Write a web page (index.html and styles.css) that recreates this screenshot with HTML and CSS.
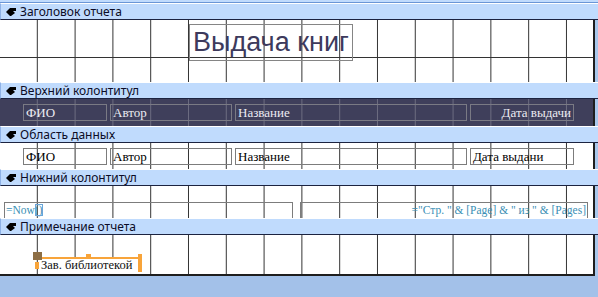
FILE: index.html
```html
<!DOCTYPE html>
<html>
<head>
	<meta charset="UTF-8">
	<title>Выдача книг - конструктор</title>
	<link rel="stylesheet" href="styles.css">
</head>
<body>
	<div class="designer">
		<div class="topstrip"></div>

		<div class="bar"><span class="selector"><svg width="10" height="8" viewBox="0 0 10 8"><path d="M0 4 L4 0 L10 0 L10 3 L7 3 L9 5 L5 8 L4 8 Z"/></svg></span>Заголовок отчета</div>
		<div class="row">
			<div class="area grid-h s-header">
				<div class="ctl title">Выдача книг</div>
			</div>
			<div class="gutter"></div>
		</div>

		<div class="bar"><span class="selector"><svg width="10" height="8" viewBox="0 0 10 8"><path d="M0 4 L4 0 L10 0 L10 3 L7 3 L9 5 L5 8 L4 8 Z"/></svg></span>Верхний колонтитул</div>
		<div class="row">
			<div class="area dark s-page">
				<div class="ctl lbl c-fio">ФИО</div>
				<div class="ctl lbl c-author">Автор</div>
				<div class="ctl lbl c-name">Название</div>
				<div class="ctl lbl c-date right">Дата выдачи</div>
			</div>
			<div class="gutter"></div>
		</div>

		<div class="bar"><span class="selector"><svg width="10" height="8" viewBox="0 0 10 8"><path d="M0 4 L4 0 L10 0 L10 3 L7 3 L9 5 L5 8 L4 8 Z"/></svg></span>Область данных</div>
		<div class="row">
			<div class="area s-data">
				<div class="ctl fld c-fio">ФИО</div>
				<div class="ctl fld c-author">Автор</div>
				<div class="ctl fld c-name">Название</div>
				<div class="ctl fld c-date">Дата выдани</div>
			</div>
			<div class="gutter"></div>
		</div>

		<div class="bar"><span class="selector"><svg width="10" height="8" viewBox="0 0 10 8"><path d="M0 4 L4 0 L10 0 L10 3 L7 3 L9 5 L5 8 L4 8 Z"/></svg></span>Нижний колонтитул</div>
		<div class="row">
			<div class="area s-footer">
				<div class="ctl expr c-now">=Now<span class="paren">()</span></div>
				<div class="ctl expr c-pages right">="Стр. " &amp; [Page] &amp; " из " &amp; [Pages]</div>
			</div>
			<div class="gutter"></div>
		</div>

		<div class="bar"><span class="selector"><svg width="10" height="8" viewBox="0 0 10 8"><path d="M0 4 L4 0 L10 0 L10 3 L7 3 L9 5 L5 8 L4 8 Z"/></svg></span>Примечание отчета</div>
		<div class="row">
			<div class="area s-note">
				<div class="ctl fld c-sign">Зав. библиотекой</div>
				<div class="sel-line"></div>
				<div class="sel-right"></div>
				<div class="handle h-mid"></div>
				<div class="handle h-left"></div>
				<div class="move"></div>
			</div>
			<div class="gutter"></div>
		</div>
	</div>
</body>
</html>
```

FILE: styles.css
```css
body {
	margin: 0;
	width: 598px;
	height: 297px;
	overflow: hidden;
	background: #a3c1e9;
	font-family: "Noto Sans", sans-serif;
}
.designer {
	width: 598px;
}
.topstrip {
	height: 3px;
	background: #c0dbfd;
	border-bottom: 1px solid #6a96d6;
	box-sizing: border-box;
}
.bar {
	height: 17px;
	box-sizing: border-box;
	background: #c0dbfd;
	border-top: 1px solid #ffffff;
	border-bottom: 1px solid #1c2340;
	border-left: 1px solid #8fb2e6;
	display: flex;
	align-items: center;
	font-size: 12px;
	color: #0c0c26;
	line-height: 1;
}
.selector {
	width: 19px;
	display: flex;
	justify-content: center;
}
.selector svg {
	fill: #000;
}
.row {
	display: flex;
}
.gutter {
	flex: 1;
	background: #a9c8ec;
	border-left: 2px solid #1e1e1e;
}
.area {
	position: relative;
	width: 593px;
	overflow: hidden;
	background-color: #fff;
	background-image: linear-gradient(to right, transparent 36.8px, #333 36.8px);
	background-size: 37.8px 100%;
}
.grid-h {
	background-image:
		linear-gradient(to right, transparent 36.8px, #333 36.8px),
		linear-gradient(to bottom, transparent 37px, #333 37px, #333 38px, transparent 38px);
	background-size: 37.8px 100%, 100% 100%;
}
.dark {
	background-color: #3f3f5b;
	background-image: linear-gradient(to right, transparent 36.8px, #6c6c80 36.8px);
}
.s-header { height: 62px; }
.s-page { height: 27px; }
.s-data { height: 26px; }
.s-footer { height: 32px; }
.s-note {
	height: 39px;
	border-bottom: 2px solid #1e1e1e;
}

.ctl {
	position: absolute;
	box-sizing: border-box;
	border: 1px solid #7c7c7c;
	white-space: nowrap;
	overflow: hidden;
	font-family: "Liberation Serif", serif;
	font-size: 13px;
	line-height: 15px;
	padding: 0 2px;
}
.right {
	text-align: right;
}
.title {
	left: 189px;
	top: 4px;
	width: 164px;
	height: 37px;
	border-color: #858585;
	font-family: "Liberation Sans", sans-serif;
	font-size: 27px;
	line-height: 34px;
	color: #3d3a5c;
	padding: 0 3px;
}
.lbl {
	top: 5px;
	height: 17px;
	color: #ececf2;
	border-color: #7a7a84;
}
.fld {
	top: 5px;
	height: 17px;
	color: #000;
	background: transparent;
}
.c-fio { left: 23px; width: 84px; }
.c-author { left: 110px; width: 122px; }
.c-name { left: 235px; width: 232px; }
.c-date { left: 470px; width: 104px; }

.expr {
	top: 16px;
	height: 20px;
	color: #3b8fb5;
	font-size: 11.5px;
	padding: 0 1px;
}
.c-now { left: 4px; width: 289px; }
.c-pages { left: 300px; width: 288px; }
.paren {
	outline: 1px solid #6aa5d8;
	outline-offset: -1px;
}

.c-sign {
	left: 38px;
	top: 23px;
	width: 103px;
	height: 16px;
	border: none;
	background: #fff;
	color: #111;
	font-size: 12.5px;
	padding: 0 3px;
}
.sel-line {
	position: absolute;
	left: 40px;
	top: 22px;
	width: 102px;
	height: 2px;
	background: #f8a43a;
}
.sel-right {
	position: absolute;
	left: 138px;
	top: 19px;
	width: 4px;
	height: 18px;
	border-left: 2px solid #f8a43a;
	border-right: 2px solid #f8a43a;
	box-sizing: border-box;
}
.handle {
	position: absolute;
	background: #f8a43a;
}
.h-mid {
	left: 86px;
	top: 19px;
	width: 5px;
	height: 3px;
}
.h-left {
	left: 35px;
	top: 27px;
	width: 4px;
	height: 7px;
}
.move {
	position: absolute;
	left: 33px;
	top: 17px;
	width: 9px;
	height: 8px;
	background: #8d6e45;
}
```
